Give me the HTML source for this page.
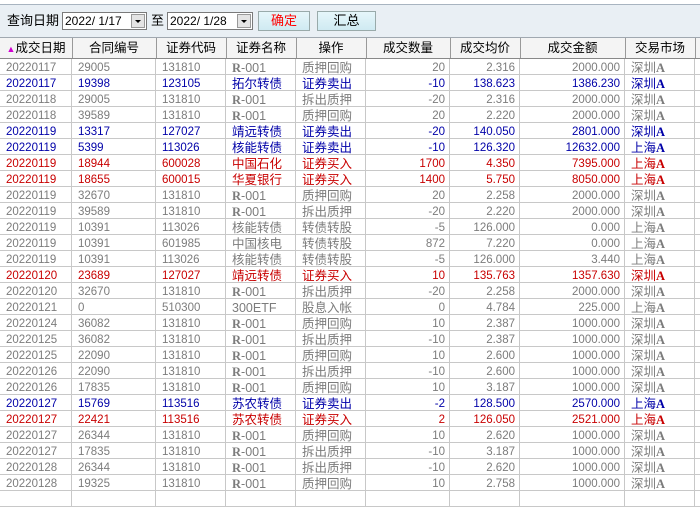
<!DOCTYPE html><html><head><meta charset="utf-8"><style>
body{margin:0;width:700px;height:495px;overflow:hidden;background:#fff;font-family:"Liberation Sans","Noto Sans CJK SC",sans-serif;font-size:12px;position:relative}
.top{position:absolute;left:0;top:0;width:700px;height:37px;background:#e9eff4}
.strip{position:absolute;left:0;top:0;width:700px;height:4px;background:#fff;border-bottom:1px solid #a8b4c0}
.abs{position:absolute;white-space:nowrap;line-height:17px}
.sel{position:absolute;top:12px;height:18px;border:1px solid #7a7a7a;background:#fff;font-size:12px;line-height:16px;padding-left:2px;box-sizing:border-box}
.sel .ar{position:absolute;right:1px;top:1px;width:14px;height:14px;background:#e4e4e4;border:1px solid #999;box-sizing:border-box}
.sel .ar:after{content:"";position:absolute;left:3px;top:5px;border-left:3px solid transparent;border-right:3px solid transparent;border-top:3px solid #000}
.btn{position:absolute;top:11px;height:20px;border:1px solid #9aa;box-sizing:border-box;background:linear-gradient(#e6f6fa,#cfeaf2);text-align:center;line-height:18px;font-size:13px}
.hd{position:absolute;top:37px;left:0;width:700px;height:22px;background:#f4f4f4;border-top:1px solid #a0a8b0;border-bottom:1px solid #888;box-sizing:border-box}
.hc{position:absolute;top:0;height:20px;line-height:20px;text-align:center;border-right:1px solid #999;font-size:12.5px}
.row{position:absolute;left:0;width:700px;height:16px;border-bottom:1px solid #c8c8c8;box-sizing:border-box}
.c{position:absolute;top:0;height:15px;line-height:16px;border-right:1px solid #c8c8c8;box-sizing:border-box;overflow:hidden;font-size:11.5px;padding-top:1px}
.g{color:#7c7c7c}.b{color:#0000a8}.r{color:#c80000}
.l{text-align:left;padding-left:6px}.rt{text-align:right;padding-right:4px}
</style></head><body>
<div class="top"></div><div class="strip"></div>
<div class="abs" style="left:7px;top:12px;font-size:13px">查询日期</div>
<div class="sel" style="left:62px;width:85px">2022/ 1/17<div class="ar"></div></div>
<div class="abs" style="left:151px;top:12px;font-size:13px">至</div>
<div class="sel" style="left:167px;width:86px">2022/ 1/28<div class="ar"></div></div>
<div class="btn" style="left:258px;width:52px;color:#f00">确定</div>
<div class="btn" style="left:317px;width:59px">汇总</div>
<div class="hd">
<div class="hc" style="left:0;width:72px"><span style="color:#d000d0;font-size:9px">▲</span>成交日期</div>
<div class="hc" style="left:72px;width:84px">合同编号</div>
<div class="hc" style="left:156px;width:70px">证券代码</div>
<div class="hc" style="left:226px;width:70px">证券名称</div>
<div class="hc" style="left:296px;width:70px">操作</div>
<div class="hc" style="left:366px;width:84px">成交数量</div>
<div class="hc" style="left:450px;width:70px">成交均价</div>
<div class="hc" style="left:520px;width:105px">成交金额</div>
<div class="hc" style="left:625px;width:70px">交易市场</div>
</div>
<div id="rows"></div>
<script>
var d=[
"g|20220117|29005|131810|R-001|质押回购|20|2.316|2000.000|深圳A",
"b|20220117|19398|123105|拓尔转债|证券卖出|-10|138.623|1386.230|深圳A",
"g|20220118|29005|131810|R-001|拆出质押|-20|2.316|2000.000|深圳A",
"g|20220118|39589|131810|R-001|质押回购|20|2.220|2000.000|深圳A",
"b|20220119|13317|127027|靖远转债|证券卖出|-20|140.050|2801.000|深圳A",
"b|20220119|5399|113026|核能转债|证券卖出|-10|126.320|12632.000|上海A",
"r|20220119|18944|600028|中国石化|证券买入|1700|4.350|7395.000|上海A",
"r|20220119|18655|600015|华夏银行|证券买入|1400|5.750|8050.000|上海A",
"g|20220119|32670|131810|R-001|质押回购|20|2.258|2000.000|深圳A",
"g|20220119|39589|131810|R-001|拆出质押|-20|2.220|2000.000|深圳A",
"g|20220119|10391|113026|核能转债|转债转股|-5|126.000|0.000|上海A",
"g|20220119|10391|601985|中国核电|转债转股|872|7.220|0.000|上海A",
"g|20220119|10391|113026|核能转债|转债转股|-5|126.000|3.440|上海A",
"r|20220120|23689|127027|靖远转债|证券买入|10|135.763|1357.630|深圳A",
"g|20220120|32670|131810|R-001|拆出质押|-20|2.258|2000.000|深圳A",
"g|20220121|0|510300|300ETF|股息入帐|0|4.784|225.000|上海A",
"g|20220124|36082|131810|R-001|质押回购|10|2.387|1000.000|深圳A",
"g|20220125|36082|131810|R-001|拆出质押|-10|2.387|1000.000|深圳A",
"g|20220125|22090|131810|R-001|质押回购|10|2.600|1000.000|深圳A",
"g|20220126|22090|131810|R-001|拆出质押|-10|2.600|1000.000|深圳A",
"g|20220126|17835|131810|R-001|质押回购|10|3.187|1000.000|深圳A",
"b|20220127|15769|113516|苏农转债|证券卖出|-2|128.500|2570.000|上海A",
"r|20220127|22421|113516|苏农转债|证券买入|2|126.050|2521.000|上海A",
"g|20220127|26344|131810|R-001|质押回购|10|2.620|1000.000|深圳A",
"g|20220127|17835|131810|R-001|拆出质押|-10|3.187|1000.000|深圳A",
"g|20220128|26344|131810|R-001|拆出质押|-10|2.620|1000.000|深圳A",
"g|20220128|19325|131810|R-001|质押回购|10|2.758|1000.000|深圳A",
"g|||||||||"];
var cols=[[0,72,"l"],[72,84,"l"],[156,70,"l"],[226,70,"l"],[296,70,"l"],[366,84,"rt"],[450,70,"rt"],[520,105,"rt"],[625,70,"l"]];
var h="";
d.forEach(function(s,i){var f=s.split("|");h+='<div class="row '+f[0]+'" style="top:'+(59+i*16)+'px">';
cols.forEach(function(c,j){var t=f[j+1];var fs=(j==3||j==4||j==8)?'font-size:12.5px;':'';
if(t=="R-001")t='<b style="font-family:Liberation Serif,serif">R</b>-001';
if(j==8&&t)t=t.replace("A",'<b style="font-family:Liberation Serif,serif">A</b>');
h+='<div class="c '+c[2]+'" style="left:'+c[0]+'px;width:'+c[1]+'px;'+fs+'">'+t+'</div>';});
h+='</div>';});
document.getElementById("rows").innerHTML=h;
</script>
</body></html>
